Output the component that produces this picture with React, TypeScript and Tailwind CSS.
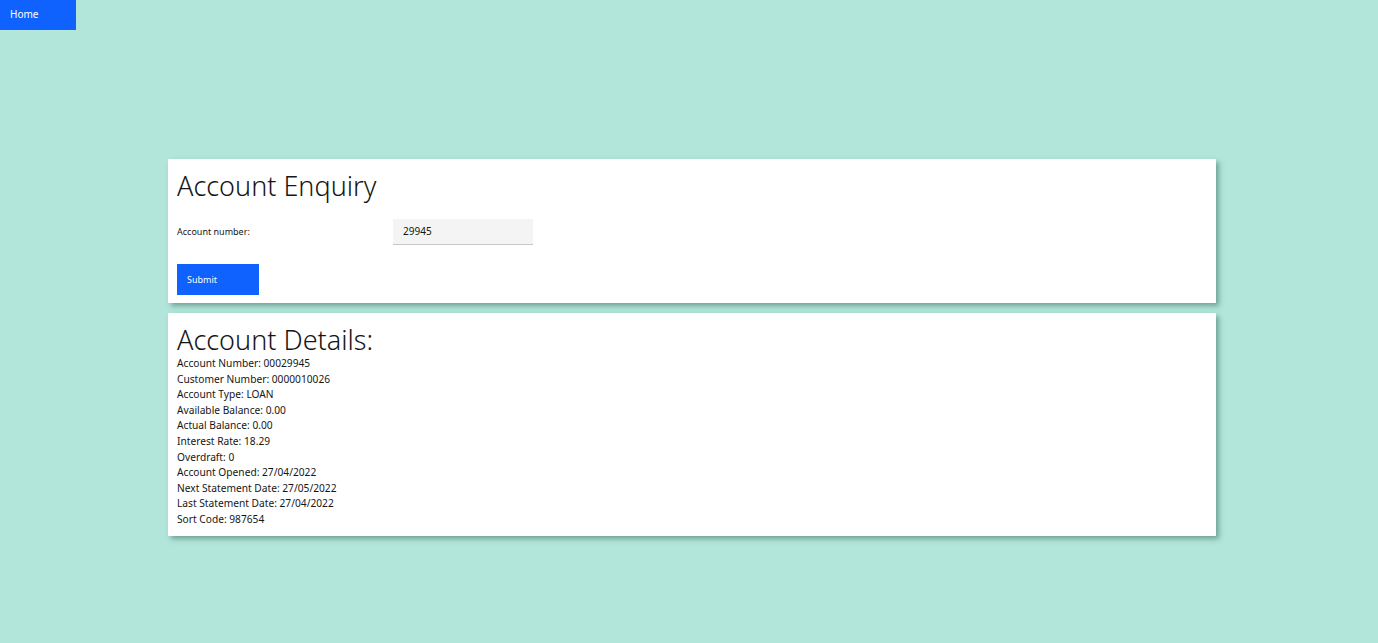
import React from "react";

const details: [string, string][] = [
  ["Account Number", "00029945"],
  ["Customer Number", "0000010026"],
  ["Account Type", "LOAN"],
  ["Available Balance", "0.00"],
  ["Actual Balance", "0.00"],
  ["Interest Rate", "18.29"],
  ["Overdraft", "0"],
  ["Account Opened", "27/04/2022"],
  ["Next Statement Date", "27/05/2022"],
  ["Last Statement Date", "27/04/2022"],
  ["Sort Code", "987654"],
];

export default function App() {
  return (
    <div
      className="min-h-[643px] w-full bg-[#b2e6da] text-[#161616]"
      style={{ fontFamily: "'Noto Sans', 'Open Sans', sans-serif" }}
    >
      <nav className="flex h-[30px]">
        <div className="flex h-[30px] w-[76px] items-center bg-[#0f62fe] pb-[1px] pl-[10px] text-[10px] text-white">
          Home
        </div>
      </nav>
      <div className="mx-[168px] mt-[129px] flex w-[1048px] flex-col gap-[10px]">
        <section className="h-[144px] bg-white px-[9px] pt-[10px] shadow-[3px_3px_5px_rgba(60,110,100,0.55)]">
          <h1 className="text-[27px] font-light leading-[33px]">Account Enquiry</h1>
          <div className="mt-[17px] flex h-[26px] items-center">
            <label className="w-[216px] text-[9px]">Account number:</label>
            <div className="flex h-[26px] w-[140px] items-center border-b border-[#c6c6c6] bg-[#f4f4f4] pl-[10px] text-[10px]">
              29945
            </div>
          </div>
          <button className="mt-[19px] flex h-[31px] w-[82px] items-center bg-[#0f62fe] pl-[10px] text-[9px] text-white">
            Submit
          </button>
        </section>
        <section className="h-[223px] bg-white px-[9px] pt-[10px] shadow-[3px_3px_5px_rgba(60,110,100,0.55)]">
          <h2 className="text-[27px] font-light leading-[33px]">Account Details:</h2>
          <div className="flex flex-col">
            {details.map(([k, v]) => (
              <div key={k} className="text-[10.2px] leading-[15.6px]">
                {k}: {v}
              </div>
            ))}
          </div>
        </section>
      </div>
    </div>
  );
}
